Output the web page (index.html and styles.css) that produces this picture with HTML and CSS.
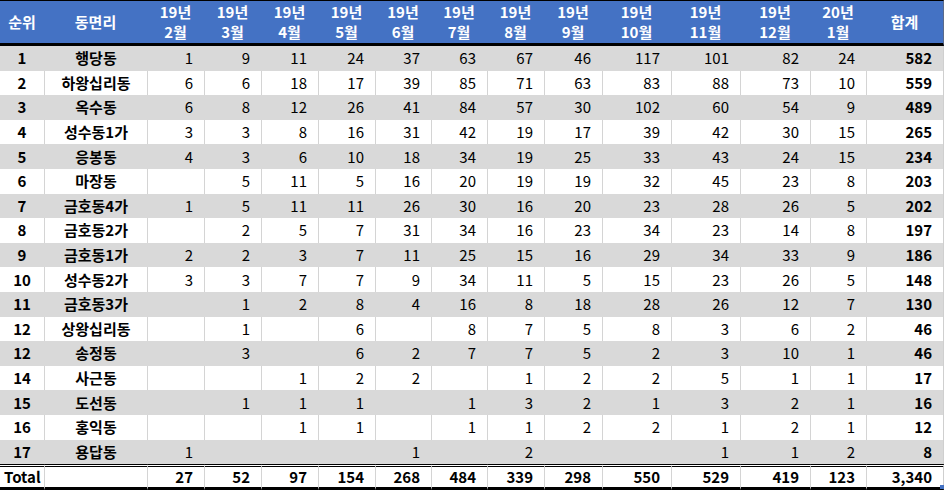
FILE: index.html
```html
<!DOCTYPE html>
<html lang="ko">
<head>
<meta charset="utf-8">
<title>동면리별 월간 현황</title>
<link rel="stylesheet" href="styles.css">
</head>
<body>
<div class="sheet">
<table class="stats">
<colgroup>
<col class="w-rank"><col class="w-name">
<col class="w57"><col class="w57"><col class="w57"><col class="w57"><col class="w56"><col class="w56"><col class="w57"><col class="w58">
<col class="w69"><col class="w69"><col class="w70"><col class="w56"><col class="w-sum">
</colgroup>
<thead>
<tr>
<th>순위</th><th>동면리</th>
<th>19년<br>2월</th><th>19년<br>3월</th><th>19년<br>4월</th><th>19년<br>5월</th><th>19년<br>6월</th><th>19년<br>7월</th><th>19년<br>8월</th><th>19년<br>9월</th><th>19년<br>10월</th><th>19년<br>11월</th><th>19년<br>12월</th><th>20년<br>1월</th>
<th>합계</th>
</tr>
</thead>
<tbody>
<tr class="alt"><td class="rank">1</td><td class="name">행당동</td><td>1</td><td>9</td><td>11</td><td>24</td><td>37</td><td>63</td><td>67</td><td>46</td><td>117</td><td>101</td><td>82</td><td>24</td><td class="sum">582</td></tr>
<tr><td class="rank">2</td><td class="name">하왕십리동</td><td>6</td><td>6</td><td>18</td><td>17</td><td>39</td><td>85</td><td>71</td><td>63</td><td>83</td><td>88</td><td>73</td><td>10</td><td class="sum">559</td></tr>
<tr class="alt"><td class="rank">3</td><td class="name">옥수동</td><td>6</td><td>8</td><td>12</td><td>26</td><td>41</td><td>84</td><td>57</td><td>30</td><td>102</td><td>60</td><td>54</td><td>9</td><td class="sum">489</td></tr>
<tr><td class="rank">4</td><td class="name">성수동1가</td><td>3</td><td>3</td><td>8</td><td>16</td><td>31</td><td>42</td><td>19</td><td>17</td><td>39</td><td>42</td><td>30</td><td>15</td><td class="sum">265</td></tr>
<tr class="alt"><td class="rank">5</td><td class="name">응봉동</td><td>4</td><td>3</td><td>6</td><td>10</td><td>18</td><td>34</td><td>19</td><td>25</td><td>33</td><td>43</td><td>24</td><td>15</td><td class="sum">234</td></tr>
<tr><td class="rank">6</td><td class="name">마장동</td><td></td><td>5</td><td>11</td><td>5</td><td>16</td><td>20</td><td>19</td><td>19</td><td>32</td><td>45</td><td>23</td><td>8</td><td class="sum">203</td></tr>
<tr class="alt"><td class="rank">7</td><td class="name">금호동4가</td><td>1</td><td>5</td><td>11</td><td>11</td><td>26</td><td>30</td><td>16</td><td>20</td><td>23</td><td>28</td><td>26</td><td>5</td><td class="sum">202</td></tr>
<tr><td class="rank">8</td><td class="name">금호동2가</td><td></td><td>2</td><td>5</td><td>7</td><td>31</td><td>34</td><td>16</td><td>23</td><td>34</td><td>23</td><td>14</td><td>8</td><td class="sum">197</td></tr>
<tr class="alt"><td class="rank">9</td><td class="name">금호동1가</td><td>2</td><td>2</td><td>3</td><td>7</td><td>11</td><td>25</td><td>15</td><td>16</td><td>29</td><td>34</td><td>33</td><td>9</td><td class="sum">186</td></tr>
<tr><td class="rank">10</td><td class="name">성수동2가</td><td>3</td><td>3</td><td>7</td><td>7</td><td>9</td><td>34</td><td>11</td><td>5</td><td>15</td><td>23</td><td>26</td><td>5</td><td class="sum">148</td></tr>
<tr class="alt"><td class="rank">11</td><td class="name">금호동3가</td><td></td><td>1</td><td>2</td><td>8</td><td>4</td><td>16</td><td>8</td><td>18</td><td>28</td><td>26</td><td>12</td><td>7</td><td class="sum">130</td></tr>
<tr><td class="rank">12</td><td class="name">상왕십리동</td><td></td><td>1</td><td></td><td>6</td><td></td><td>8</td><td>7</td><td>5</td><td>8</td><td>3</td><td>6</td><td>2</td><td class="sum">46</td></tr>
<tr class="alt"><td class="rank">12</td><td class="name">송정동</td><td></td><td>3</td><td></td><td>6</td><td>2</td><td>7</td><td>7</td><td>5</td><td>2</td><td>3</td><td>10</td><td>1</td><td class="sum">46</td></tr>
<tr><td class="rank">14</td><td class="name">사근동</td><td></td><td></td><td>1</td><td>2</td><td>2</td><td></td><td>1</td><td>2</td><td>2</td><td>5</td><td>1</td><td>1</td><td class="sum">17</td></tr>
<tr class="alt"><td class="rank">15</td><td class="name">도선동</td><td></td><td>1</td><td>1</td><td>1</td><td></td><td>1</td><td>3</td><td>2</td><td>1</td><td>3</td><td>2</td><td>1</td><td class="sum">16</td></tr>
<tr><td class="rank">16</td><td class="name">홍익동</td><td></td><td></td><td>1</td><td>1</td><td></td><td>1</td><td>1</td><td>2</td><td>2</td><td>1</td><td>2</td><td>1</td><td class="sum">12</td></tr>
<tr class="alt"><td class="rank">17</td><td class="name">용답동</td><td>1</td><td></td><td></td><td></td><td>1</td><td></td><td>2</td><td></td><td></td><td>1</td><td>1</td><td>2</td><td class="sum">8</td></tr>
</tbody>
<tfoot>
<tr class="total"><td class="label">Total</td><td></td><td>27</td><td>52</td><td>97</td><td>154</td><td>268</td><td>484</td><td>339</td><td>298</td><td>550</td><td>529</td><td>419</td><td>123</td><td class="sum">3,340</td></tr>
</tfoot>
</table>
<span class="handle"></span>
</div>
</body>
</html>
```

FILE: styles.css
```css
html, body {
  margin: 0;
  padding: 0;
  background: #ffffff;
}

body {
  font-family: "Noto Sans CJK KR", "Noto Sans", sans-serif;
  color: #000000;
}

.sheet {
  position: relative;
  width: 946px;
  height: 491px;
  overflow: hidden;
}

.stats {
  table-layout: fixed;
  width: 944px;
  border-collapse: separate;
  border-spacing: 0;
  font-size: 15px;
  line-height: 20px;
}

.w-rank { width: 44px; }
.w-name { width: 103px; }
.w56 { width: 56px; }
.w57 { width: 57px; }
.w58 { width: 58px; }
.w69 { width: 69px; }
.w70 { width: 70px; }
.w-sum { width: 78px; }

.stats thead tr {
  height: 46px;
}

.stats th {
  background: #4472c4;
  color: #ffffff;
  font-weight: 700;
  text-align: center;
  vertical-align: middle;
  padding: 0;
  border-top: 1px solid #000000;
  border-bottom: 3px solid #000000;
}

.stats th:last-child {
  border-right: 1px solid #5a6a8a;
}

.stats tbody tr {
  height: 24.6px;
}

.stats td {
  padding: 0 11px 0 0;
  text-align: right;
  vertical-align: middle;
  white-space: nowrap;
  border-left: 1px solid #d4d4d4;
}

.stats td:first-child {
  border-left: 0;
}

.stats td:last-child {
  border-right: 1px solid #cfcfcf;
}

.stats tr.alt td {
  background: #d9d9d9;
  border-left-color: #d9d9d9;
}

.stats tr.alt td:last-child {
  border-right-color: #cfcfcf;
}

.stats td.rank {
  text-align: center;
  padding: 0;
  font-weight: 700;
}

.stats td.name {
  text-align: center;
  padding: 0;
  font-weight: 700;
}

.stats td.sum {
  font-weight: 700;
}

.stats tfoot tr {
  height: 26px;
}

.stats tr.total td {
  font-weight: 700;
  background: #ffffff;
  border-top: 3px double #000000;
  border-bottom: 3px solid #000000;
}

.stats td.label {
  text-align: left;
  padding: 0 0 0 4px;
}

.handle {
  position: absolute;
  left: 940px;
  top: 485px;
  width: 4px;
  height: 4px;
  background: #4472c4;
}
```
